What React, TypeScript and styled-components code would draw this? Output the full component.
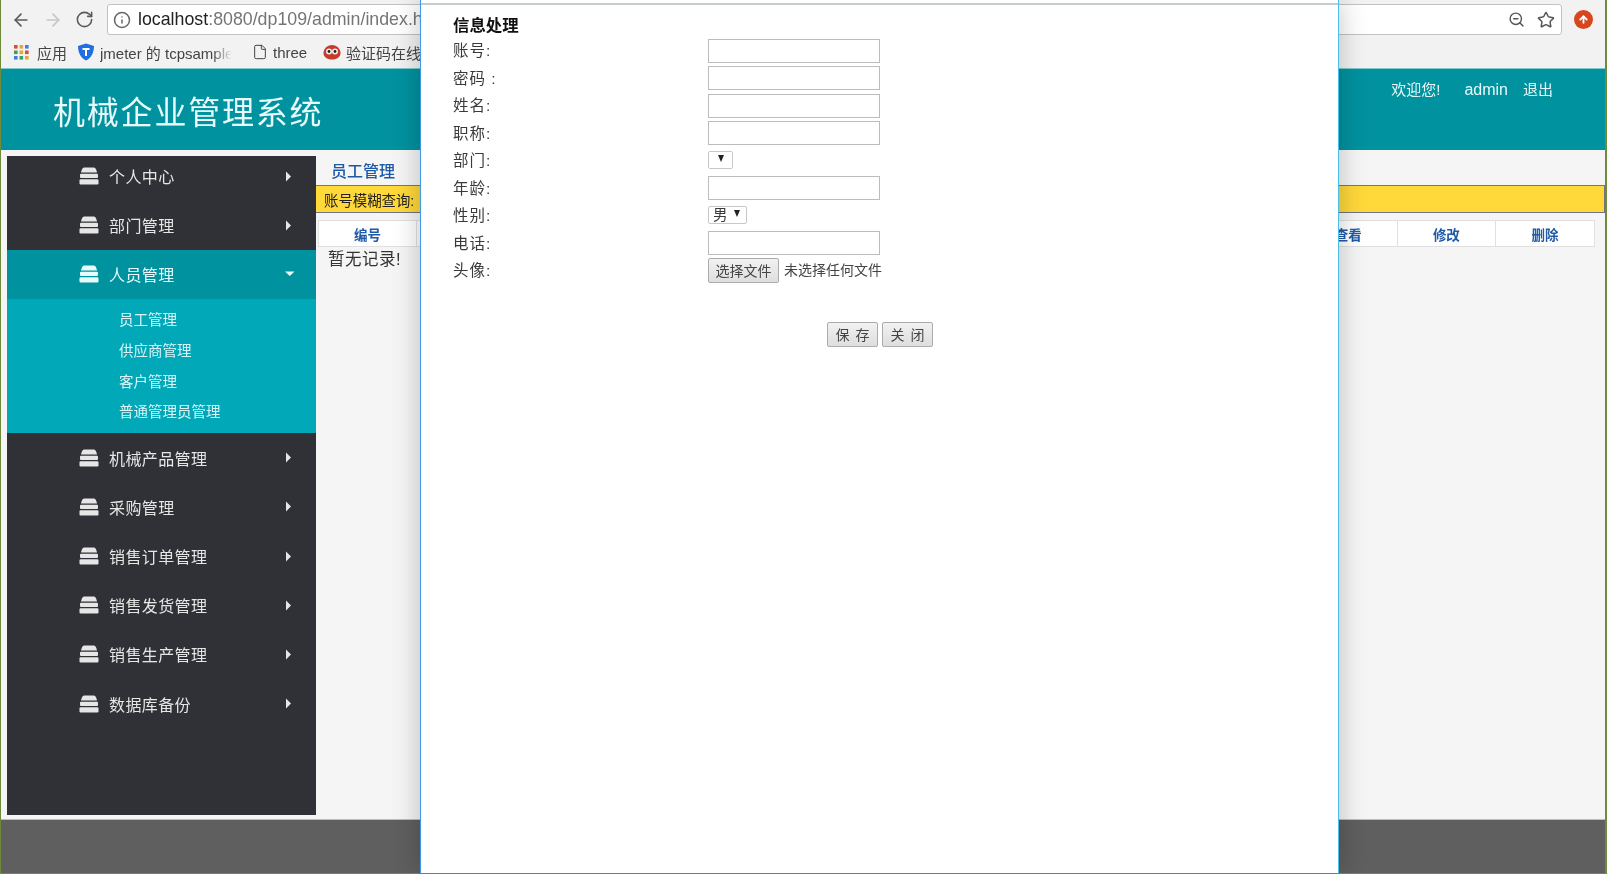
import React from 'react';
import styled, { createGlobalStyle } from 'styled-components';
import { ArrowLeft, ArrowRight, RotateCw, Info, ZoomOut, Star, File, ArrowUp } from 'lucide-react';

const GlobalStyle = createGlobalStyle`
  html, body {
    margin: 0;
    padding: 0;
    height: 100%;
    overflow: hidden;
    background: #6f8a3a;
    font-family: "Liberation Sans", "Noto Sans CJK SC", sans-serif;
  }
  * { box-sizing: border-box; }
  svg { flex: none; }
`;

const Window = styled.div`
  position: relative;
  width: 1604px;
  height: 873px;
  margin-left: 1px;
  display: flex;
  flex-direction: column;
  background: #f5f5f5;
  overflow: hidden;
  filter: blur(0.4px);
`;

const Toolbar = styled.div`
  height: 38px;
  flex: none;
  display: flex;
  align-items: center;
  padding: 1px 0 0 10px;
  background: #f2f2f2;
`;

const NavButton = styled.span<{ $muted?: boolean }>`
  width: 32px;
  display: flex;
  color: ${(p) => (p.$muted ? '#c4c6c8' : '#5a5a5a')};
`;

const AddressBar = styled.div`
  width: 1455px;
  height: 31px;
  display: flex;
  align-items: center;
  gap: 7px;
  padding: 0 6px 0 5px;
  background: #fff;
  border: 1px solid #c2c2c2;
  border-radius: 3px;
  color: #666;
`;

const Url = styled.div`
  flex: 1;
  font-size: 17.8px;
  color: #757575;
  white-space: nowrap;
  b { font-weight: 400; color: #222; }
`;

const AddressIcons = styled.div`
  display: flex;
  align-items: center;
  gap: 12px;
  color: #555;
`;

const ExtensionDot = styled.span`
  width: 19px;
  height: 19px;
  margin-left: 12px;
  display: flex;
  align-items: center;
  justify-content: center;
  border-radius: 50%;
  background: #d8461e;
  color: #fff;
`;

const Bookmarks = styled.div`
  height: 30px;
  flex: none;
  display: flex;
  align-items: center;
  padding: 0 0 2px 12px;
  background: #f2f2f2;
  font-size: 15px;
  color: #444;
`;

const Bookmark = styled.span<{ $width: number }>`
  width: ${(p) => p.$width}px;
  flex: none;
  display: flex;
  align-items: center;
  gap: 5px;
  white-space: nowrap;
  overflow: hidden;
`;

const FadedLabel = styled.span`
  width: 132px;
  overflow: hidden;
  mask-image: linear-gradient(90deg, #000 85%, transparent);
`;

const Header = styled.header`
  height: 82px;
  flex: none;
  display: flex;
  justify-content: space-between;
  padding: 0 52px 0 52px;
  background: #00929f;
  border-top: 1px solid #7fc9cf;
  color: #e8fbfc;
`;

const Brand = styled.h1`
  margin: 26px 0 0;
  font-size: 32px;
  font-weight: 400;
  letter-spacing: 1.8px;
  line-height: 36px;
`;

const UserBox = styled.div`
  margin-top: 11px;
  display: flex;
  gap: 24px;
  font-size: 15px;
  line-height: 20px;
`;

const UserName = styled.span`
  font-size: 16px;
`;

const Logout = styled.span`
  margin-left: -9px;
`;

const Body = styled.div`
  height: 670px;
  flex: none;
  display: flex;
  padding: 6px 0 4px 6px;
  background: #f5f5f5;
  border-bottom: 1px solid #bdbdbd;
`;

const Sidebar = styled.nav`
  width: 309px;
  flex: none;
  overflow: hidden;
  background: #303136;
  color: #e6e6e6;
`;

const MenuList = styled.div`
  margin-top: -4.5px;
`;

const MenuItem = styled.div<{ $active?: boolean }>`
  height: 49.2px;
  display: flex;
  align-items: center;
  padding: 0 24px 0 72px;
  font-size: 16px;
  background: ${(p) => (p.$active ? '#00929f' : 'transparent')};
  color: ${(p) => (p.$active ? '#e8fbfc' : '#e6e6e6')};
`;

const MenuLabel = styled.span`
  flex: 1;
  margin-left: 10px;
  letter-spacing: 0.4px;
`;

const ArrowOpen = styled.svg`
  margin-right: -4px;
`;

const SubMenu = styled.div`
  height: 134px;
  padding-top: 4px;
  background: #00a8b8;
`;

const SubItem = styled.div`
  height: 30.8px;
  display: flex;
  align-items: center;
  padding-left: 112px;
  font-size: 14.5px;
  color: #d9f5f7;
`;

const Main = styled.main`
  flex: 1;
  min-width: 0;
  display: flex;
  flex-direction: column;
`;

const PageTitle = styled.div`
  height: 29px;
  padding: 5px 0 0 15px;
  font-size: 16px;
  line-height: 22px;
  font-weight: 500;
  color: #1f5aa6;
`;

const SearchBar = styled.div`
  height: 28px;
  display: flex;
  align-items: center;
  padding-left: 8px;
  background: #ffd83a;
  border-top: 1px solid #8a7a3a;
  border-bottom: 1px solid #6e7386;
  border-right: 1px solid #6e7386;
  font-size: 14.4px;
  color: #222;
`;

const TableHead = styled.div`
  margin: 7px 10px 0 2px;
  display: grid;
  grid-template-columns: repeat(13, 1fr);
  height: 27px;
  background: #fff;
  border: 1px solid #e0e0e0;
`;

const HeadCell = styled.div`
  display: flex;
  align-items: center;
  justify-content: center;
  border-right: 1px solid #e0e0e0;
  font-size: 13.5px;
  font-weight: 700;
  color: #1f5aa6;
  &:last-child { border-right: 0; }
`;

const EmptyNote = styled.div`
  padding: 1px 0 0 12px;
  font-size: 16.5px;
  letter-spacing: 0.5px;
  line-height: 22px;
  color: #333;
`;

const Footer = styled.footer`
  flex: 1;
  background: #5f5f5f;
`;

const Modal = styled.div`
  position: absolute;
  top: 0;
  bottom: -1px;
  left: 419px;
  width: 919px;
  padding: 15px 0 0 32px;
  background: #fff;
  border-left: 1px solid #3f9bea;
  border-right: 1px solid #49c0e6;
  box-shadow: 0 0 26px rgba(0, 0, 0, 0.24);
  &::before {
    content: '';
    position: absolute;
    top: 3px;
    left: 0;
    right: 0;
    height: 2px;
    background: #c6cdd0;
  }
`;

const ModalTitle = styled.div`
  height: 22px;
  font-size: 16.4px;
  line-height: 21px;
  font-weight: 700;
  color: #111;
`;

const Form = styled.div`
  display: grid;
  grid-template-columns: 255px 1fr;
  grid-auto-rows: 27.5px;
  align-items: center;
  font-size: 15.5px;
  line-height: 20px;
  color: #3a3a3a;
`;

const Label = styled.div`
  padding-top: 1px;
  letter-spacing: 1px;
`;

const TextInput = styled.input`
  display: block;
  width: 172px;
  height: 24px;
  padding: 0 2px;
  border: 1px solid #bcbcbc;
  background: #fff;
`;

const Picker = styled.div<{ $center?: boolean }>`
  width: ${(p) => (p.$center ? 25 : 39)}px;
  height: 18px;
  display: flex;
  align-items: center;
  justify-content: ${(p) => (p.$center ? 'center' : 'flex-end')};
  gap: 4px;
  padding: ${(p) => (p.$center ? '0' : '0 6px 0 4px')};
  margin-top: -2px;
  border: 1px solid #c8c8c8;
  border-radius: 2px;
  font-size: 14.5px;
`;

const PickerValue = styled.span`
  flex: 1;
`;

const Caret = styled.span`
  width: 0;
  height: 0;
  margin-top: -2px;
  border-left: 3.5px solid transparent;
  border-right: 3.5px solid transparent;
  border-top: 7px solid #222;
`;

const FileRow = styled.div`
  display: flex;
  align-items: center;
  gap: 5px;
  margin-top: -1px;
  font-size: 14px;
  color: #444;
`;

const GrayButton = styled.button`
  height: 25px;
  padding: 0;
  background: linear-gradient(#f1f1f1, #dedede);
  border: 1px solid #acacac;
  border-radius: 2px;
  font-family: inherit;
  font-size: 14px;
  color: #444;
`;

const FileButton = styled(GrayButton)`
  width: 71px;
`;

const Actions = styled.div`
  margin: 37px 0 0 374px;
  display: flex;
  gap: 4px;
`;

const ActionButton = styled(GrayButton)`
  width: 51px;
  letter-spacing: 6px;
  text-indent: 6px;
`;

const AppsGrid = styled.svg`
  margin: 0 8px 0 1px;
`;

const StackIcon: React.FC = () => (
  <svg width="20" height="18" viewBox="0 0 20 18" fill="currentColor">
    <path d="M5 0.5 H15 C16.5 0.5 17.5 3 18 5.5 H2 C2.5 3 3.5 0.5 5 0.5 Z" />
    <rect x="1" y="6.8" width="18" height="4.2" rx="1" />
    <rect x="0.5" y="12.3" width="19" height="5.2" rx="1.2" />
  </svg>
);

const Arrow: React.FC<{ open?: boolean }> = ({ open }) =>
  open ? (
    <ArrowOpen width="12" height="8" viewBox="0 0 12 8" fill="currentColor">
      <path d="M1 1.5 H10.5 L5.75 6 Z" />
    </ArrowOpen>
  ) : (
    <svg width="7" height="11" viewBox="0 0 7 11" fill="currentColor">
      <path d="M1 0.5 L6 5.5 L1 10.5 Z" />
    </svg>
  );

const Apps: React.FC = () => {
  const colours = ['#d94b3c', '#e9a53a', '#3f7fe0', '#3c9f5a', '#e9a53a', '#d94b3c', '#3f7fe0', '#3c9f5a', '#e9a53a'];
  return (
    <AppsGrid width="15" height="15" viewBox="0 0 15 15">
      {colours.map((c, i) => (
        <rect key={i} x={(i % 3) * 5.5} y={Math.floor(i / 3) * 5.5} width="3.6" height="3.6" fill={c} />
      ))}
    </AppsGrid>
  );
};

const ShieldLogo: React.FC = () => (
  <svg width="18" height="18" viewBox="0 0 18 18">
    <path d="M9 0.5 L17 3 C17 10 14 15 9 17.5 C4 15 1 10 1 3 Z" fill="#1f6fe0" />
    <path d="M5.5 5 H12.5 V7 H10 V13 H8 V7 H5.5 Z" fill="#fff" />
  </svg>
);

const BirdLogo: React.FC = () => (
  <svg width="18" height="18" viewBox="0 0 18 18">
    <path d="M9 2 C14 2 17.5 6 17.5 10 C17.5 14 14 16.5 9 16.5 C4 16.5 0.5 14 0.5 10 C0.5 6 4 2 9 2 Z" fill="#c83a2c" />
    <circle cx="6" cy="8.5" r="3" fill="#eee" />
    <circle cx="12" cy="8.5" r="3" fill="#eee" />
    <circle cx="6" cy="8.5" r="1.4" fill="#222" />
    <circle cx="12" cy="8.5" r="1.4" fill="#222" />
  </svg>
);

const beforeSub = ['个人中心', '部门管理'];
const subItems = ['员工管理', '供应商管理', '客户管理', '普通管理员管理'];
const afterSub = ['机械产品管理', '采购管理', '销售订单管理', '销售发货管理', '销售生产管理', '数据库备份'];
const columns = ['编号', '账号', '密码', '姓名', '职称', '部门', '年龄', '性别', '电话', '头像', '查看', '修改', '删除'];
const fields: { label: string; kind: 'text' | 'dept' | 'sex' | 'file' }[] = [
  { label: '账号:', kind: 'text' },
  { label: '密码 :', kind: 'text' },
  { label: '姓名:', kind: 'text' },
  { label: '职称:', kind: 'text' },
  { label: '部门:', kind: 'dept' },
  { label: '年龄:', kind: 'text' },
  { label: '性别:', kind: 'sex' },
  { label: '电话:', kind: 'text' },
  { label: '头像:', kind: 'file' },
];

const renderField = (kind: string) => {
  if (kind === 'text') return <TextInput type="text" />;
  if (kind === 'dept') {
    return (
      <Picker $center>
        <Caret />
      </Picker>
    );
  }
  if (kind === 'sex') {
    return (
      <Picker>
        <PickerValue>男</PickerValue>
        <Caret />
      </Picker>
    );
  }
  return (
    <FileRow>
      <FileButton>选择文件</FileButton>
      未选择任何文件
    </FileRow>
  );
};

const App: React.FC = () => {
  return (
    <>
      <GlobalStyle />
      <Window>
        <Toolbar>
          <NavButton><ArrowLeft size={20} /></NavButton>
          <NavButton $muted><ArrowRight size={20} /></NavButton>
          <NavButton><RotateCw size={19} /></NavButton>
          <AddressBar>
            <Info size={18} />
            <Url><b>localhost</b>:8080/dp109/admin/index.html</Url>
            <AddressIcons>
              <ZoomOut size={17} />
              <Star size={18} />
            </AddressIcons>
          </AddressBar>
          <ExtensionDot><ArrowUp size={11} strokeWidth={4} /></ExtensionDot>
        </Toolbar>
        <Bookmarks>
          <Apps />
          <Bookmark $width={40}>应用</Bookmark>
          <Bookmark $width={175}>
            <ShieldLogo />
            <FadedLabel>jmeter 的 tcpsample</FadedLabel>
          </Bookmark>
          <Bookmark $width={71}><File size={16} strokeWidth={1.5} />three</Bookmark>
          <Bookmark $width={120}><BirdLogo />验证码在线识别</Bookmark>
        </Bookmarks>
        <Header>
          <Brand>机械企业管理系统</Brand>
          <UserBox>
            <span>欢迎您!</span>
            <UserName>admin</UserName>
            <Logout>退出</Logout>
          </UserBox>
        </Header>
        <Body>
          <Sidebar>
            <MenuList>
              {beforeSub.map((m) => (
                <MenuItem key={m}><StackIcon /><MenuLabel>{m}</MenuLabel><Arrow /></MenuItem>
              ))}
              <MenuItem $active><StackIcon /><MenuLabel>人员管理</MenuLabel><Arrow open /></MenuItem>
              <SubMenu>
                {subItems.map((s) => <SubItem key={s}>{s}</SubItem>)}
              </SubMenu>
              {afterSub.map((m) => (
                <MenuItem key={m}><StackIcon /><MenuLabel>{m}</MenuLabel><Arrow /></MenuItem>
              ))}
            </MenuList>
          </Sidebar>
          <Main>
            <PageTitle>员工管理</PageTitle>
            <SearchBar>账号模糊查询:</SearchBar>
            <TableHead>
              {columns.map((c) => <HeadCell key={c}>{c}</HeadCell>)}
            </TableHead>
            <EmptyNote>暂无记录!</EmptyNote>
          </Main>
        </Body>
        <Footer />
        <Modal>
          <ModalTitle>信息处理</ModalTitle>
          <Form>
            {fields.map((f) => (
              <React.Fragment key={f.label}>
                <Label>{f.label}</Label>
                {renderField(f.kind)}
              </React.Fragment>
            ))}
          </Form>
          <Actions>
            <ActionButton>保存</ActionButton>
            <ActionButton>关闭</ActionButton>
          </Actions>
        </Modal>
      </Window>
    </>
  );
};

export default App;
